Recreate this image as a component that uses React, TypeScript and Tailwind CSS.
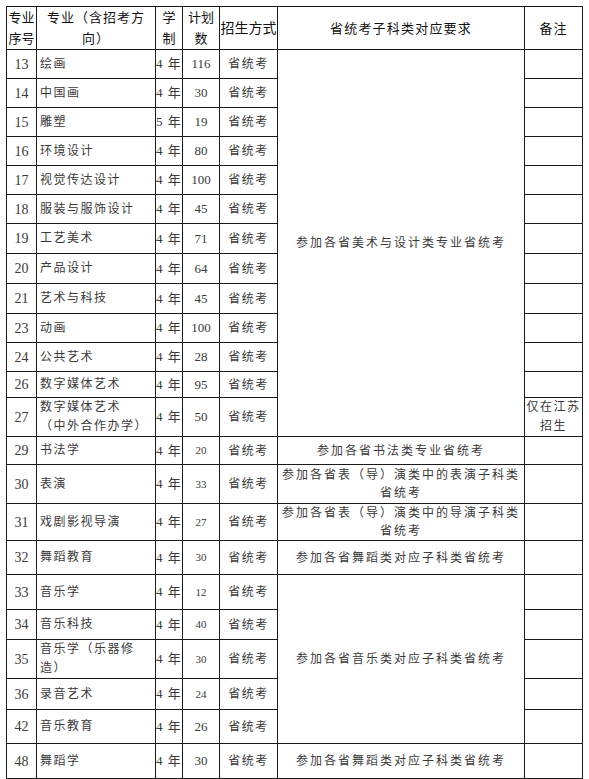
import React from 'react';

type Row = {
  no: string;
  name: React.ReactNode;
  years: string;
  plan: string;
  small?: boolean;
  h: string;
  req?: { text: React.ReactNode; span: number } | null;
  note?: React.ReactNode;
};

const ART = '参加各省美术与设计类专业省统考';
const MUSIC = '参加各省音乐类对应子科类省统考';
const DANCE = '参加各省舞蹈类对应子科类省统考';

const rows: Row[] = [
  { no: '13', name: '绘画', years: '4 年', plan: '116', h: 'h-[29px]', req: { text: ART, span: 13 } },
  { no: '14', name: '中国画', years: '4 年', plan: '30', h: 'h-[29px]', req: null },
  { no: '15', name: '雕塑', years: '5 年', plan: '19', h: 'h-[29px]', req: null },
  { no: '16', name: '环境设计', years: '4 年', plan: '80', h: 'h-[29px]', req: null },
  { no: '17', name: '视觉传达设计', years: '4 年', plan: '100', h: 'h-[29px]', req: null },
  { no: '18', name: '服装与服饰设计', years: '4 年', plan: '45', h: 'h-[29px]', req: null },
  { no: '19', name: '工艺美术', years: '4 年', plan: '71', h: 'h-[30px]', req: null },
  { no: '20', name: '产品设计', years: '4 年', plan: '64', h: 'h-[30px]', req: null },
  { no: '21', name: '艺术与科技', years: '4 年', plan: '45', h: 'h-[30px]', req: null },
  { no: '23', name: '动画', years: '4 年', plan: '100', h: 'h-[29px]', req: null },
  { no: '24', name: '公共艺术', years: '4 年', plan: '28', h: 'h-[29px]', req: null },
  { no: '26', name: '数字媒体艺术', years: '4 年', plan: '95', h: 'h-[26px]', req: null },
  {
    no: '27',
    name: (
      <>
        数字媒体艺术
        <br />
        （中外合作办学）
      </>
    ),
    years: '4 年',
    plan: '50',
    h: 'h-[38px]',
    req: null,
    note: (
      <>
        仅在江苏
        <br />
        招生
      </>
    ),
  },
  { no: '29', name: '书法学', years: '4 年', plan: '20', small: true, h: 'h-[28px]', req: { text: '参加各省书法类专业省统考', span: 1 } },
  {
    no: '30',
    name: '表演',
    years: '4 年',
    plan: '33',
    small: true,
    h: 'h-[39px]',
    req: {
      text: (
        <>
          参加各省表（导）演类中的表演子科类
          <br />
          省统考
        </>
      ),
      span: 1,
    },
  },
  {
    no: '31',
    name: '戏剧影视导演',
    years: '4 年',
    plan: '27',
    small: true,
    h: 'h-[37px]',
    req: {
      text: (
        <>
          参加各省表（导）演类中的导演子科类
          <br />
          省统考
        </>
      ),
      span: 1,
    },
  },
  { no: '32', name: '舞蹈教育', years: '4 年', plan: '30', small: true, h: 'h-[34px]', req: { text: DANCE, span: 1 } },
  { no: '33', name: '音乐学', years: '4 年', plan: '12', small: true, h: 'h-[35px]', req: { text: MUSIC, span: 5 } },
  { no: '34', name: '音乐科技', years: '4 年', plan: '40', small: true, h: 'h-[30px]', req: null },
  {
    no: '35',
    name: (
      <>
        音乐学（乐器修
        <br />
        造）
      </>
    ),
    years: '4 年',
    plan: '30',
    small: true,
    h: 'h-[38px]',
    req: null,
  },
  { no: '36', name: '录音艺术', years: '4 年', plan: '24', small: true, h: 'h-[31px]', req: null },
  { no: '42', name: '音乐教育', years: '4 年', plan: '26', h: 'h-[34px]', req: null },
  { no: '48', name: '舞蹈学', years: '4 年', plan: '30', h: 'h-[35px]', req: { text: DANCE, span: 1 } },
];

const cell = 'border border-[#1a1a1a] p-0 align-middle';

export default function App() {
  return (
    <div className="min-h-screen bg-white pl-[6px] pt-[6px] font-['Liberation_Serif','Noto_Sans_CJK_SC',serif] text-[#3a3a3a]">
      <table className="w-[576px] table-fixed border-collapse">
        <colgroup>
          <col className="w-[30px]" />
          <col className="w-[119px]" />
          <col className="w-[27px]" />
          <col className="w-[37px]" />
          <col className="w-[58px]" />
          <col className="w-[247px]" />
          <col className="w-[58px]" />
        </colgroup>
        <thead>
          <tr className="h-[43px] text-[13px] leading-[21px] text-[#111]">
            <th className={`${cell} font-normal`}>
              专业
              <br />
              序号
            </th>
            <th className={`${cell} font-normal tracking-[1px]`}>
              专业（含招考方
              <br />
              向）
            </th>
            <th className={`${cell} font-normal`}>
              学
              <br />
              制
            </th>
            <th className={`${cell} font-normal`}>
              计划
              <br />
              数
            </th>
            <th className={`${cell} text-[14px] font-normal`}>招生方式</th>
            <th className={`${cell} font-normal tracking-[1.2px]`}>省统考子科类对应要求</th>
            <th className={`${cell} font-normal tracking-[1px]`}>备注</th>
          </tr>
        </thead>
        <tbody>
          {rows.map(r => (
            <tr key={r.no} className={r.h}>
              <td className={`${cell} text-center text-[14px]`}>{r.no}</td>
              <td className={`${cell} pl-[3px] text-left text-[12px] leading-[19px] tracking-[1.5px]`}>{r.name}</td>
              <td className={`${cell} whitespace-nowrap text-left text-[13px] tracking-[1px]`}>{r.years}</td>
              <td className={`${cell} text-center ${r.small ? 'text-[11px]' : 'text-[13px]'}`}>{r.plan}</td>
              <td className={`${cell} text-center text-[12px] tracking-[1.5px]`}>省统考</td>
              {r.req && (
                <td rowSpan={r.req.span} className={`${cell} text-center text-[12px] leading-[18px] tracking-[2px]`}>
                  {r.req.text}
                </td>
              )}
              <td className={`${cell} text-center text-[12px] leading-[19px] tracking-[1.5px]`}>{r.note}</td>
            </tr>
          ))}
        </tbody>
      </table>
    </div>
  );
}
